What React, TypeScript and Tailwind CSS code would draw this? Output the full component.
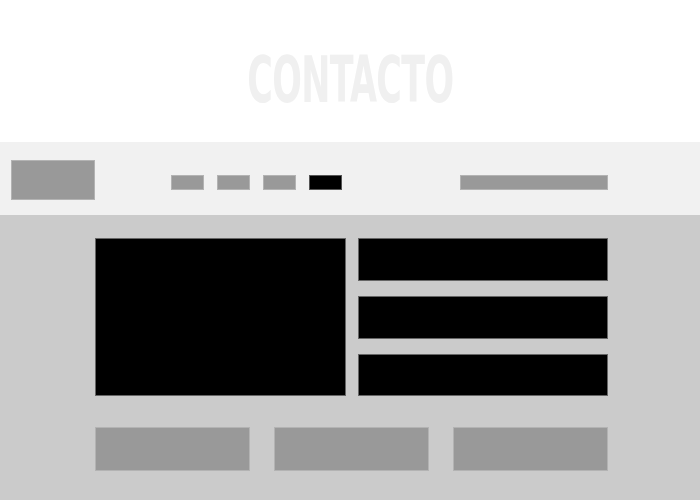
import React from 'react';

const navItems = [false, false, false, true];

export default function App() {
  return (
    <div className="min-h-screen flex flex-col bg-white font-['Liberation_Sans',sans-serif]">
      {/* Title */}
      <header className="h-[142px] flex items-center justify-center">
        <h1 className="inline-block scale-x-[0.605] text-[64px] leading-none font-bold text-[#f0f0f0] font-['DejaVu_Sans_Condensed','DejaVu_Sans',sans-serif] tracking-[-1px] mt-[17px]">
          CONTACTO
        </h1>
      </header>

      {/* Nav bar */}
      <nav className="h-[73px] bg-[#f1f1f1] flex items-start">
        <div className="ml-[11px] mt-[18px] w-[84px] h-[40px] bg-[#999999] border border-[#b3b3b3]" />
        <div className="ml-[76px] mt-[33px] flex gap-[13px]">
          {navItems.map((active, i) => (
            <div
              key={i}
              className={`w-[33px] h-[15px] border ${
                active ? 'bg-black border-[#555]' : 'bg-[#999999] border-[#b3b3b3]'
              }`}
            />
          ))}
        </div>
        <div className="ml-[118px] mt-[33px] w-[148px] h-[15px] bg-[#999999] border border-[#b3b3b3]" />
      </nav>

      {/* Content */}
      <main className="flex-1 bg-[#cbcbcb] pt-[23px]">
        <div className="ml-[95px] w-[513px]">
          <div className="flex gap-[12px]">
            <div className="w-[251px] h-[158px] bg-black border border-[#666]" />
            <div className="flex-1 flex flex-col gap-[15px]">
              <div className="h-[43px] bg-black border border-[#666]" />
              <div className="h-[43px] bg-black border border-[#666]" />
              <div className="h-[42px] bg-black border border-[#666]" />
            </div>
          </div>
          <div className="mt-[31px] grid grid-cols-3 gap-[24px]">
            {[0, 1, 2].map((i) => (
              <div key={i} className="h-[44px] bg-[#999999] border border-[#b3b3b3]" />
            ))}
          </div>
        </div>
      </main>
    </div>
  );
}
